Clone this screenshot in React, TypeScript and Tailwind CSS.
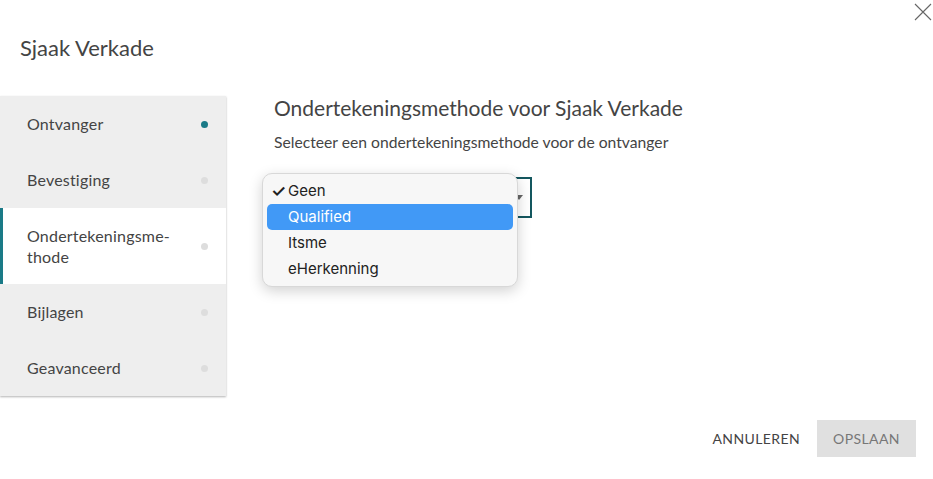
const steps = [
  { name: 'Ontvanger', done: true },
  { name: 'Bevestiging' },
  { name: 'Ondertekeningsme-\nthode', active: true },
  { name: 'Bijlagen' },
  { name: 'Geavanceerd' },
];

const options = ['Geen', 'Qualified', 'Itsme', 'eHerkenning'];

const App = () => {
  return (
    <div className="relative w-[933px] h-[479px] bg-white overflow-hidden text-[#444] font-['Lato',sans-serif]">
      {/* Close */}
      <button className="absolute right-[1px] top-[3px] w-[18px] h-[18px]">
        <svg viewBox="0 0 18 18" className="w-[18px] h-[18px]" stroke="#666" strokeWidth="1.1">
          <path d="M1 1 L17 17 M17 1 L1 17" />
        </svg>
      </button>

      <div className="pt-[34px] pl-[20px] h-[96px]">
        <h1 className="text-[22px] leading-[28px]">Sjaak Verkade</h1>
      </div>

      <div className="flex">
        {/* Sidebar */}
        <nav className="w-[226px] bg-[#eeeeee] shadow-[0_1px_2px_rgba(0,0,0,0.3)]">
          {steps.map((s) => (
            <div
              key={s.name}
              className={`flex items-center justify-between pr-[18px] ${
                s.active ? 'bg-white border-l-[3px] border-[#1a7a87] pl-[24px] h-[76px]' : 'pl-[27px] h-[56px]'
              }`}
            >
              <span className="text-[16px] leading-[21px] tracking-[0.2px] whitespace-pre-line -mt-[1px]">{s.name}</span>
              <span className={`w-[7px] h-[7px] rounded-full ${s.done ? 'bg-[#1a7a87]' : 'bg-[#dddddd]'}`} />
            </div>
          ))}
        </nav>

        {/* Content */}
        <div className="flex-1 pl-[48px]">
          <h2 className="text-[21px] leading-[24px]">Ondertekeningsmethode voor Sjaak Verkade</h2>
          <p className="mt-[12px] text-[15.7px] leading-[20px]">
            Selecteer een ondertekeningsmethode voor de ontvanger
          </p>

          <div className="relative mt-[25px] w-[258px]">
            <div className="h-[41px] border-2 border-[#14575f] flex items-center justify-end pr-[7px]">
              <span className="w-0 h-0 border-l-[4px] border-r-[4px] border-t-[5px] border-l-transparent border-r-transparent border-t-[#666]" />
            </div>

            {/* Native-like open menu */}
            <div className="absolute left-[-12px] top-[-4px] w-[256px] bg-[#f7f7f7] rounded-[10px] border border-[#d8d8d8] shadow-[0_4px_14px_rgba(0,0,0,0.18)] py-[4px] px-[4px] font-['Inter',sans-serif] text-[15px] text-[#222]">
              {options.map((o, i) => (
                <div
                  key={o}
                  className={`relative h-[26px] flex items-center pl-[21px] rounded-[5px] ${
                    i === 1 ? 'bg-[#4199f6] text-white' : ''
                  }`}
                >
                  {i === 0 && <span className="absolute left-[4px] top-[1px] text-[17px] font-semibold">✓</span>}
                  {o}
                </div>
              ))}
            </div>
          </div>
        </div>
      </div>

      {/* Footer */}
      <div className="absolute right-[17px] bottom-[22px] flex items-center gap-[17px]">
        <button className="text-[14px] tracking-[0.4px] text-[#444]">ANNULEREN</button>
        <button className="w-[99px] h-[37px] bg-[#e0e0e0] text-[14px] tracking-[0.4px] text-[#777]">OPSLAAN</button>
      </div>
    </div>
  );
};

export default App;
